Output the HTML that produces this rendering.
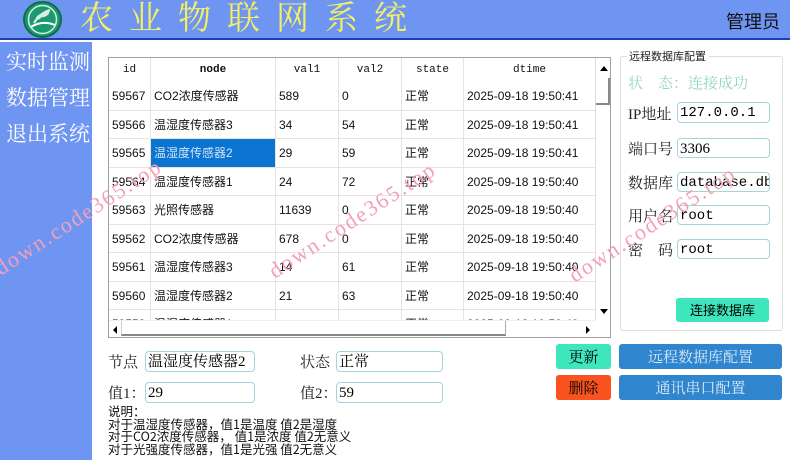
<!DOCTYPE html>
<html><head><meta charset="utf-8"><style>
*{margin:0;padding:0;box-sizing:border-box}
body{width:790px;height:460px;overflow:hidden;background:#fff;font-family:"Liberation Sans","Noto Sans CJK SC",sans-serif;position:relative}
.hdr{position:absolute;left:0;top:0;width:790px;height:40px;background:#6f95f2;border-bottom:2px solid #1f3fb0}
.logo{position:absolute;left:23px;top:1px;width:39px;height:37px;border-radius:50%;background:#1a9a6e;border:2px solid #0d6e4e}
.title{position:absolute;left:80px;top:-1px;font-family:"Liberation Serif","Noto Serif CJK SC",serif;font-size:33px;color:#f5f060;letter-spacing:16px;line-height:40px}
.admin{position:absolute;right:10px;top:8px;font-size:18px;color:#111;font-family:"Noto Sans CJK SC",sans-serif}
.side{position:absolute;left:0;top:42px;width:92px;height:418px;background:#6f95f2}
.side div{font-family:"Noto Serif CJK SC",serif;color:#fff;font-size:21px;position:absolute;left:6px}
.tbl{position:absolute;left:108px;top:57px;width:503px;height:281px;border:1px solid #a0a0a0;overflow:hidden;background:#fff}
.row{position:absolute;left:0;height:28.5px;width:486px;border-bottom:1px solid #e4e4e4;font-size:12px;color:#111}
.row span{position:absolute;top:0;height:100%;line-height:28px;padding-left:3px;border-right:1px solid #e4e4e4}
.h span{font-family:"Liberation Mono",monospace;font-size:11px;text-align:center;padding:0}
.inp{position:absolute;border:1px solid #9fd6dc;border-radius:4px;background:#fff;font-family:"Liberation Serif","Noto Serif CJK SC",serif;font-size:15px;line-height:20px;padding-left:2px;overflow:hidden;white-space:nowrap}
.lbl{position:absolute;font-family:"Liberation Serif","Noto Serif CJK SC",serif;font-size:15px;color:#222}
.btn{position:absolute;border-radius:3px;text-align:center;font-family:"Noto Serif CJK SC",serif;font-size:15px}
.wm{position:absolute;font-family:"Liberation Serif",serif;font-size:22px;color:#f3a0b8;transform:rotate(-33deg);transform-origin:left bottom;white-space:nowrap;letter-spacing:2px}
</style></head><body>
<div class="hdr">
<div class="logo"><svg width="35" height="33" viewBox="0 0 35 33"><circle cx="17.5" cy="16.5" r="14" fill="none" stroke="#d9f0e4" stroke-width="1.5"/><path d="M6 24 Q17 17 30 22" stroke="#fff" stroke-width="2" fill="none"/><path d="M9 20 Q15 10 25 7" stroke="#e8f5ee" stroke-width="2" fill="none"/><ellipse cx="20" cy="11" rx="5" ry="2.5" fill="#d8eee3" transform="rotate(-30 20 11)"/><ellipse cx="14" cy="14" rx="4" ry="2" fill="#d8eee3" transform="rotate(-40 14 14)"/></svg></div>
<div class="title">农业物联网系统</div>
<div class="admin">管理员</div>
</div>
<div class="side"><div style="top:4px">实时监测</div><div style="top:40px">数据管理</div><div style="top:76px">退出系统</div></div>

<div class="tbl">
<div class="row h" style="top:0;height:24px;border-bottom:none">
<span style="left:0;width:42px;line-height:24px">id</span><span style="left:42px;width:125px;line-height:24px;font-weight:bold">node</span><span style="left:167px;width:63px;line-height:24px">val1</span><span style="left:230px;width:63px;line-height:24px">val2</span><span style="left:293px;width:62px;line-height:24px">state</span><span style="left:355px;width:131px;line-height:24px;border:none">dtime</span></div>
<div id="rows"></div>
<div style="position:absolute;left:486px;top:0;width:16px;height:262px;background:#fff;border-left:1px solid #ddd"><div style="position:absolute;left:4px;top:8px;border:4px solid transparent;border-bottom:5px solid #000;border-top:none"></div><div style="position:absolute;left:0;top:20px;width:14px;height:27px;border-right:2px solid #888;border-bottom:2px solid #888"></div><div style="position:absolute;left:4px;top:251px;border:4px solid transparent;border-top:5px solid #000;border-bottom:none"></div></div>
<div style="position:absolute;left:0;top:262px;width:486px;height:17px;background:#fff;border-top:1px solid #eee"><div style="position:absolute;left:4px;top:5px;border:4px solid transparent;border-right:4px solid #000;border-left:none"></div><div style="position:absolute;left:12px;top:0;width:385px;height:15px;border-bottom:2px solid #888;border-left:1px solid #ccc;border-right:1px solid #aaa"></div><div style="position:absolute;left:477px;top:5px;border:4px solid transparent;border-left:4px solid #000;border-right:none"></div></div>
</div>

<div style="position:absolute;left:620px;top:56px;width:163px;height:275px;border:1px solid #ddd;border-radius:3px"></div>
<div style="position:absolute;left:626px;top:48px;background:#fff;padding:0 3px;font-size:11px;font-family:'Noto Sans CJK SC',sans-serif;color:#222">远程数据库配置</div>
<div class="lbl" style="left:628px;top:72px;color:#8fd4c4;font-size:15px">状　态：连接成功</div>
<div class="lbl" style="left:628px;top:103px">IP地址</div><div class="inp" style="left:677px;top:102px;width:93px;height:21px;font-family:'Liberation Mono',monospace;font-size:14px">127.0.0.1</div>
<div class="lbl" style="left:628px;top:138px">端口号</div><div class="inp" style="left:677px;top:138px;width:93px;height:20px">3306</div>
<div class="lbl" style="left:628px;top:172px">数据库</div><div class="inp" style="left:677px;top:172px;width:93px;height:20px;font-family:'Liberation Mono',monospace;font-size:14px">database.db</div>
<div class="lbl" style="left:628px;top:205px">用户名</div><div class="inp" style="left:677px;top:205px;width:93px;height:20px;font-family:'Liberation Mono',monospace;font-size:14px">root</div>
<div class="lbl" style="left:628px;top:239px">密　码</div><div class="inp" style="left:677px;top:239px;width:93px;height:20px;font-family:'Liberation Mono',monospace;font-size:14px">root</div>
<div class="btn" style="left:676px;top:298px;width:93px;height:24px;line-height:24px;background:#3ee6bd;font-family:'Noto Sans CJK SC',sans-serif;font-size:13px">连接数据库</div>

<div class="lbl" style="left:108px;top:351px">节点</div><div class="inp" style="left:145px;top:351px;width:110px;height:21px">温湿度传感器2</div>
<div class="lbl" style="left:300px;top:351px">状态</div><div class="inp" style="left:336px;top:351px;width:107px;height:21px">正常</div>
<div class="lbl" style="left:108px;top:382px">值1：</div><div class="inp" style="left:145px;top:382px;width:110px;height:21px">29</div>
<div class="lbl" style="left:300px;top:382px">值2：</div><div class="inp" style="left:336px;top:382px;width:107px;height:21px">59</div>
<div style="position:absolute;left:108px;top:405px;font-size:12.5px;line-height:12.5px;font-family:'Noto Sans CJK SC',sans-serif;color:#111;white-space:nowrap">说明：<br>对于温湿度传感器，值1是温度 值2是湿度<br>对于CO2浓度传感器， 值1是浓度 值2无意义<br>对于光强度传感器，值1是光强 值2无意义</div>

<div class="btn" style="left:556px;top:344px;width:55px;height:25px;line-height:25px;background:#3ee6bd">更新</div>
<div class="btn" style="left:556px;top:375px;width:55px;height:25px;line-height:25px;background:#fa5320">删除</div>
<div class="btn" style="left:619px;top:344px;width:163px;height:25px;line-height:25px;background:#2f86cf;color:#d9e8f7">远程数据库配置</div>
<div class="btn" style="left:619px;top:375px;width:163px;height:25px;line-height:25px;background:#2f86cf;color:#d9e8f7">通讯串口配置</div>

<div class="wm" style="left:4px;top:255px">down.code365.top</div>
<div class="wm" style="left:278px;top:258px">down.code365.top</div>
<div class="wm" style="left:578px;top:262px">down.code365.top</div>

<script>
var d=[["59567","CO2浓度传感器","589","0"],["59566","温湿度传感器3","34","54"],["59565","温湿度传感器2","29","59"],["59564","温湿度传感器1","24","72"],["59563","光照传感器","11639","0"],["59562","CO2浓度传感器","678","0"],["59561","温湿度传感器3","14","61"],["59560","温湿度传感器2","21","63"],["59559","温湿度传感器1","","",""]];
var h="";d.forEach(function(r,i){var t=24+i*28.5;var tm=i<3?"19:50:41":"19:50:40";var sel=i==2?"background:#0a74d0;color:#cfe6fa;":"";
h+='<div class="row" style="top:'+t+'px"><span style="left:0;width:42px">'+r[0]+'</span><span style="left:42px;width:125px;'+sel+'">'+r[1]+'</span><span style="left:167px;width:63px">'+r[2]+'</span><span style="left:230px;width:63px">'+r[3]+'</span><span style="left:293px;width:62px">正常</span><span style="left:355px;width:131px;border:none">2025-09-18 '+tm+'</span></div>';});
document.getElementById("rows").innerHTML=h;
</script>
</body></html>
